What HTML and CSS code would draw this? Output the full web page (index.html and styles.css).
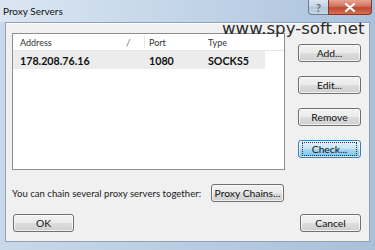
FILE: index.html
```html
<!DOCTYPE html>
<html>
<head>
<meta charset="utf-8">
<link rel="stylesheet" href="styles.css">
</head>
<body>
<div class="window">
  <div class="titlebar">
    <span class="title">Proxy Servers</span>
    <div class="caption-btns">
      <span class="cap help">?</span>
      <span class="cap close">
        <svg width="12" height="9" viewBox="0 0 12 9"><path d="M2 1 L10 8 M10 1 L2 8" stroke="#fff" stroke-width="2.2" stroke-linecap="round"/></svg>
      </span>
    </div>
  </div>
  <div class="client">
    <div class="top-row">
      <div class="listbox">
        <div class="lv-header">
          <span class="col c-addr">Address</span>
          <span class="col c-slash">/</span>
          <span class="col c-port">Port</span>
          <span class="col c-type">Type</span>
        </div>
        <div class="lv-row selected">
          <span class="col c-addr">178.208.76.16</span>
          <span class="col c-slash"></span>
          <span class="col c-port">1080</span>
          <span class="col c-type">SOCKS5</span>
        </div>
      </div>
      <div class="side-btns">
        <button class="btn">Add...</button>
        <button class="btn">Edit...</button>
        <button class="btn">Remove</button>
        <button class="btn focused"><span class="focus-rect">Check...</span></button>
      </div>
    </div>
    <div class="chain-row">
      <span class="chain-text">You can chain several proxy servers together:</span>
      <button class="btn chains">Proxy Chains...</button>
    </div>
    <div class="bottom-row">
      <button class="btn okc">OK</button>
      <button class="btn okc">Cancel</button>
    </div>
  </div>
  <div class="watermark">www.spy-soft.net</div>
</div>
</body>
</html>
```
FILE: styles.css
```css
* { box-sizing: border-box; }
html, body { margin: 0; padding: 0; }
body {
  width: 375px;
  height: 250px;
  overflow: hidden;
  font-family: Lato, "Noto Sans", sans-serif;
  font-size: 10px;
  color: #1a1a1a;
}
.window {
  position: relative;
  width: 375px;
  height: 250px;
  background: linear-gradient(to right, #c9d8e8 0%, #b9cde2 50%, #a9c0d9 100%);
  display: flex;
  flex-direction: column;
  padding: 0 5px 8px 5px;
}
.titlebar {
  height: 22px;
  flex: none;
  display: flex;
  align-items: flex-start;
  justify-content: space-between;
  margin: 0 -5px;
  padding: 0 3px 0 3px;
  background: linear-gradient(to right, #dbe6f2 0%, #c7d8ea 40%, #b6cbe2 75%, #a9c1dc 100%);
}
.title {
  font-size: 10px;
  line-height: 22px;
  color: #111;
}
.caption-btns {
  display: flex;
  height: 15px;
}
.cap {
  display: flex;
  align-items: center;
  justify-content: center;
  height: 15px;
  border: 1px solid #6d7f95;
  border-top: none;
}
.help {
  width: 20px;
  border-radius: 0 0 0 4px;
  background: linear-gradient(#dbe5f0, #c3d2e2 50%, #b3c5da 51%, #c7d6e7);
  color: #5b6b80;
  font-size: 11px;
  font-weight: bold;
  border-right: none;
}
.close {
  width: 44px;
  border-radius: 0 0 4px 0;
  background: linear-gradient(#e8a493, #d2705f 45%, #c2472f 55%, #d0705a);
  border-color: #7a3a30;
}
.client {
  flex: 1;
  background: #f0f0f0;
  border: 1px solid #8ea3bb;
  box-shadow: inset 0 1px 0 #fff;
  padding: 10px 8px 0 6px;
  display: flex;
  flex-direction: column;
}
.top-row {
  display: flex;
  gap: 13px;
}
.listbox {
  width: 273px;
  height: 137px;
  background: #fff;
  border: 1px solid #8f8f8f;
  padding: 0;
}
.lv-header, .lv-row {
  display: flex;
  align-items: center;
}
.lv-header {
  height: 17px;
  color: #333;
  border-bottom: 1px solid #e6e6e6;
  font-size: 9px;
}
.lv-row {
  height: 18px;
  width: 252px;
  font-weight: bold;
  font-size: 10.7px;
  color: #111;
}
.lv-row.selected { background: #ececec; }
.col { white-space: nowrap; }
.c-addr { width: 112px; padding-left: 7px; }
.c-slash { width: 20px; color: #777; font-size: 10px; padding-left: 1px; }
.lv-header .c-slash { border-right: 1px solid #e6e6e6; }
.c-port { width: 59px; padding-left: 4px; }
.c-type { width: 60px; padding-left: 4px; }
.side-btns {
  display: flex;
  flex-direction: column;
  gap: 14px;
  padding-top: 11px;
}
.btn {
  font-family: Lato, "Noto Sans", sans-serif;
  font-size: 10.3px;
  color: #111;
  height: 18px;
  width: 63px;
  padding: 0;
  white-space: nowrap;
  border: 1px solid #707070;
  border-radius: 3px;
  background: linear-gradient(#f2f2f2 0%, #ebebeb 48%, #dddddd 52%, #cfcfcf 100%);
  box-shadow: inset 0 0 0 1px rgba(255,255,255,0.7);
  display: flex;
  align-items: center;
  justify-content: center;
  line-height: 1;
}
.btn.focused {
  border-color: #3c7fb1;
  background: linear-gradient(#e5f4fc 0%, #c4e5f6 48%, #a7d9f3 52%, #7fc0e3 100%);
  box-shadow: inset 0 0 0 1px rgba(255,255,255,0.6);
}
.focus-rect {
  border: 1px dotted #333;
  padding: 1px 6px;
  width: 55px;
  text-align: center;
}
.chain-row {
  display: flex;
  align-items: center;
  margin-top: 14px;
  gap: 11px;
}
.chain-text {
  font-size: 9.6px;
  width: 188px;
  white-space: nowrap;
}
.btn.chains { width: 73px; }
.bottom-row {
  display: flex;
  justify-content: space-between;
  margin-top: 12px;
  padding-left: 1px;
}
.btn.okc { width: 61px; }
.watermark {
  position: absolute;
  left: 222px;
  top: 20px;
  font-family: "DejaVu Sans", sans-serif;
  font-size: 16.6px;
  color: #2b2b2b;
  line-height: 18px;
}
```
